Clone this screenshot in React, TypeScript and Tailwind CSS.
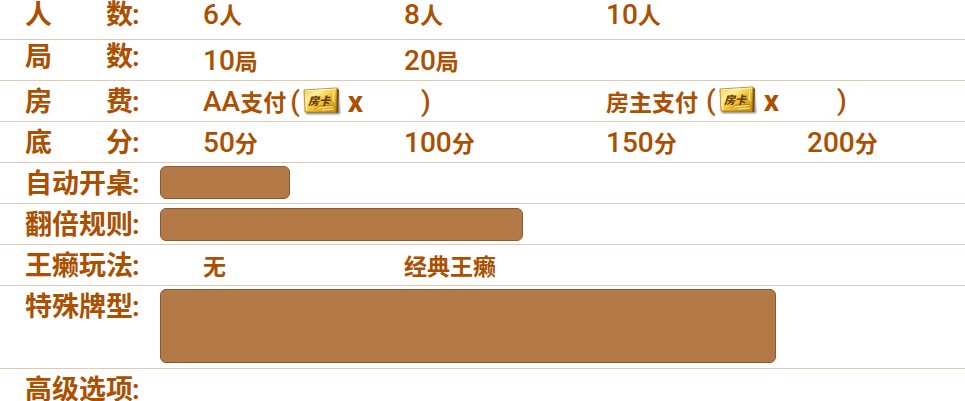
import type { ReactNode } from "react";

const latin = "font-['Roboto','Noto_Sans_CJK_SC',sans-serif] text-[28px] font-medium";
const han = "font-['Noto_Sans_CJK_SC',sans-serif] text-[23px] font-bold";

type RowProps = {
  label: string;
  leading?: string;
  optionLeading?: string;
  height?: string;
  last?: boolean;
  children?: ReactNode;
};

function Row({
  label,
  leading = "leading-[37px]",
  optionLeading = "leading-[40px]",
  height = "h-[41px]",
  last = false,
  children,
}: RowProps) {
  return (
    <div className={`flex items-start ${height} ${last ? "" : "border-b border-[#dccbb5]"}`}>
      <dt
        className={`flex w-[160px] shrink-0 items-baseline pl-[25px] font-['Noto_Sans_CJK_SC',sans-serif] text-[27px] font-bold ${leading}`}
      >
        <span className="flex w-[108px] shrink-0 justify-between">
          {label.length === 2 ? label.split("").map((c) => <span key={c}>{c}</span>) : label}
        </span>
        <span className="-ml-px font-['Roboto',sans-serif]">:</span>
      </dt>
      <dd className={`min-w-0 grow ${optionLeading}`}>{children}</dd>
    </div>
  );
}

function Options({ children }: { children: ReactNode }) {
  return (
    <div className="grid grid-cols-[201px_202px_201px_1fr] pl-[43px] whitespace-nowrap">
      {children}
    </div>
  );
}

function Option({ value, text }: { value?: string; text: string }) {
  return (
    <span className="flex items-baseline">
      {value && <span className={latin}>{value}</span>}
      <span className={han}>{text}</span>
    </span>
  );
}

function RoomCard() {
  return (
    <svg width="40" height="32" viewBox="0 0 40 32" role="img" aria-label="房卡" className="shrink-0">
      <defs>
        <linearGradient id="gold" x1="0" y1="0" x2="1" y2="1">
          <stop offset="0" stopColor="#f3c437" />
          <stop offset="0.3" stopColor="#fff0a0" />
          <stop offset="0.55" stopColor="#f2c32f" />
          <stop offset="1" stopColor="#c98705" />
        </linearGradient>
        <filter id="shade" x="-20%" y="-20%" width="140%" height="140%">
          <feGaussianBlur stdDeviation="1.2" />
        </filter>
      </defs>
      <path d="M3 5L36 2.500L38 28L4 28Z" fill="#4a3a20" opacity="0.7" filter="url(#shade)" />
      <path d="M34 2L37 4L36 27L33 26Z" fill="#6b4a16" />
      <path d="M2 4L35 2L34 26L3 26Z" fill="url(#gold)" stroke="#b98518" strokeWidth="0.8" />
      <path d="M3 5L34 3M32 5L31 14L33 16M4 19L5 25" fill="none" stroke="#fff6bd" strokeWidth="1" />
      <path d="M14 22L31 20.500M20 24L32 23" fill="none" stroke="#fff2a7" strokeWidth="1.200" />
      <path d="M13 23L18 20L31 19.500" fill="none" stroke="#ac7410" strokeWidth="0.8" />
      <text
        x="6"
        y="19"
        fill="#6b3905"
        fontFamily="Noto Sans CJK SC, sans-serif"
        fontSize="11"
        fontWeight="900"
        fontStyle="italic"
      >
        房卡
      </text>
    </svg>
  );
}

function Payment({ value, text, spaced = false }: { value?: string; text: string; spaced?: boolean }) {
  return (
    <span className="flex items-center">
      <Option value={value} text={text} />
      <span className={`${latin} ${spaced ? "ml-2" : "ml-1"}`}>(</span>
      <span className="ml-[2px]">
        <RoomCard />
      </span>
      <span className="ml-[6px] font-['Roboto',sans-serif] text-[30px] font-bold">x</span>
      <span className={`${latin} ml-[58px]`}>)</span>
    </span>
  );
}

function Panel({ size }: { size: string }) {
  return <div className={`rounded-md border border-[#8c5a30] bg-[#b37a48] ${size}`} />;
}

export default function App() {
  return (
    <main className="w-full overflow-hidden bg-white text-[#ab4f00]">
      <dl>
        <Row label="人数" height="h-10" leading="leading-[26px]" optionLeading="leading-[28px]">
          <Options>
            <Option value="6" text="人" />
            <Option value="8" text="人" />
            <Option value="10" text="人" />
          </Options>
        </Row>
        <Row label="局数" leading="leading-[30px]">
          <Options>
            <Option value="10" text="局" />
            <Option value="20" text="局" />
          </Options>
        </Row>
        <Row label="房费">
          <Options>
            <span className="col-span-2">
              <Payment value="AA" text="支付" />
            </span>
            <span className="col-span-2">
              <Payment text="房主支付" spaced />
            </span>
          </Options>
        </Row>
        <Row label="底分">
          <Options>
            <Option value="50" text="分" />
            <Option value="100" text="分" />
            <Option value="150" text="分" />
            <Option value="200" text="分" />
          </Options>
        </Row>
        <Row label="自动开桌">
          <Panel size="mt-[3px] h-[33px] w-[130px]" />
        </Row>
        <Row label="翻倍规则">
          <Panel size="mt-1 h-[33px] w-[363px]" />
        </Row>
        <Row label="王癞玩法">
          <Options>
            <Option text="无" />
            <Option text="经典王癞" />
          </Options>
        </Row>
        <Row label="特殊牌型" height="h-[83px]">
          <Panel size="mt-[3px] h-[74px] w-[616px]" />
        </Row>
        <Row label="高级选项" height="h-8" last />
      </dl>
    </main>
  );
}
